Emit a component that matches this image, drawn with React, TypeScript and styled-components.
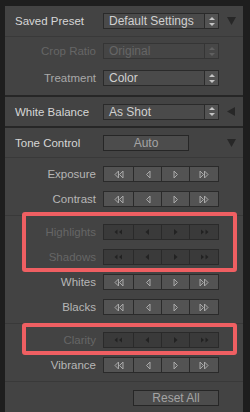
import React from 'react';
import styled, { createGlobalStyle } from 'styled-components';

const GlobalStyle = createGlobalStyle`
  html, body {
    margin: 0;
    padding: 0;
    background: #1e1e1e;
  }
  body {
    font-family: "Liberation Sans", Arial, sans-serif;
  }
`;

const Frame = styled.div`
  width: 250px;
  height: 412px;
  overflow: hidden;
  box-sizing: border-box;
  padding: 6px 7px 0 5px;
  background: #1e1e1e;
`;

const Panel = styled.div`
  height: 100%;
  background: #434343;
  display: flex;
  flex-direction: column;
`;

const Block = styled.div<{ $first?: boolean }>`
  border-top: ${({ $first }) => ($first ? 'none' : '2px solid #262626')};
`;

const HeaderRow = styled.div<{ $height: number; $line?: boolean }>`
  display: grid;
  grid-template-columns: 98px 116px 1fr;
  align-items: center;
  height: ${({ $height }) => $height}px;
  border-bottom: ${({ $line }) => ($line ? '1px solid #393939' : 'none')};
`;

const Group = styled.div<{ $pad?: string; $gap?: number; $line?: boolean }>`
  position: relative;
  display: flex;
  flex-direction: column;
  gap: ${({ $gap }) => $gap ?? 9}px;
  padding: ${({ $pad }) => $pad ?? '8px 0 8px'};
  border-top: ${({ $line }) => ($line ? '1px solid #393939' : 'none')};
`;

const Row = styled.div`
  display: grid;
  grid-template-columns: 98px 116px;
  align-items: center;
  height: 16px;
`;

const Stack = styled.div`
  position: relative;
  display: flex;
  flex-direction: column;
  gap: 9px;
`;

const Marker = styled.div<{ $top: number; $bottom: number }>`
  position: absolute;
  left: 17px;
  right: 6px;
  top: ${({ $top }) => $top}px;
  bottom: ${({ $bottom }) => $bottom}px;
  border: 4px solid #ef5f62;
  border-radius: 3px;
  pointer-events: none;
`;

type Tone = 'header' | 'normal' | 'dim' | 'off';

const labelColors: Record<Tone, string> = {
  header: '#d6d6d6',
  normal: '#b6b6b6',
  dim: '#a8a8a8',
  off: '#666666',
};

const Label = styled.span<{ $tone: Tone; $left?: boolean }>`
  font-size: 11.5px;
  line-height: 16px;
  white-space: nowrap;
  color: ${({ $tone }) => labelColors[$tone]};
  text-align: ${({ $left }) => ($left ? 'left' : 'right')};
  padding: ${({ $left }) => ($left ? '0 0 0 10px' : '0 7px 0 0')};
`;

const Select = styled.div<{ $off?: boolean }>`
  display: flex;
  height: 16px;
  box-sizing: border-box;
  border: 1px solid ${({ $off }) => ($off ? '#353535' : '#2a2a2a')};
  background: ${({ $off }) => ($off ? '#454545' : '#4a4a4a')};
`;

const SelectText = styled.span<{ $off?: boolean }>`
  flex: 1;
  padding-left: 5px;
  font-size: 12px;
  line-height: 14px;
  color: ${({ $off }) => ($off ? '#666666' : '#d0d0d0')};
`;

const Stepper = styled.span<{ $off?: boolean }>`
  width: 13px;
  display: flex;
  align-items: center;
  justify-content: center;
  border-left: 1px solid ${({ $off }) => ($off ? '#353535' : '#2a2a2a')};
  background: ${({ $off }) => ($off ? '#474747' : '#535353')};
`;

const PushButton = styled.div<{ $width: number }>`
  width: ${({ $width }) => $width}px;
  height: 16px;
  box-sizing: border-box;
  border: 1px solid #262626;
  background: #4c4c4c;
  color: #a4a4a4;
  font-size: 12px;
  line-height: 14px;
  text-align: center;
`;

const Segments = styled.div`
  display: grid;
  grid-template-columns: 29px 27px 27px 28px;
  gap: 1px;
  height: 16px;
  box-sizing: border-box;
  border: 1px solid #2a2a2a;
  background: #2a2a2a;
`;

const Segment = styled.div<{ $off?: boolean }>`
  display: flex;
  align-items: center;
  justify-content: center;
  background: ${({ $off }) => ($off ? '#3a3a3a' : '#535353')};
`;

const Twisty = styled.div`
  display: flex;
  justify-content: center;
  align-items: center;
`;

const ResetWrap = styled.div`
  display: grid;
  grid-template-columns: 128px 86px;
  padding: 8px 0;
  border-top: 1px solid #393939;
`;

const StepIcon = ({ off }: { off?: boolean }) => {
  const c = off ? '#606060' : '#c4c4c4';
  return (
    <svg width="6" height="9" viewBox="0 0 6 9">
      <polygon points="3,0 6,3 0,3" fill={c} />
      <polygon points="0,6 6,6 3,9" fill={c} />
    </svg>
  );
};

const Arrow = ({ kind, off }: { kind: 'll' | 'l' | 'r' | 'rr'; off?: boolean }) => {
  if (off) {
    const f = '#222222';
    if (kind === 'll')
      return (
        <svg width="9" height="8" viewBox="0 0 9 8">
          <polygon points="3.5,1.5 3.5,6.5 0.5,4" fill={f} />
          <polygon points="8,1.5 8,6.5 5,4" fill={f} />
        </svg>
      );
    if (kind === 'rr')
      return (
        <svg width="9" height="8" viewBox="0 0 9 8">
          <polygon points="1,1.5 1,6.5 4,4" fill={f} />
          <polygon points="5.5,1.5 5.5,6.5 8.5,4" fill={f} />
        </svg>
      );
    if (kind === 'l')
      return (
        <svg width="5" height="8" viewBox="0 0 5 8">
          <polygon points="4,1 4,7 0.5,4" fill={f} />
        </svg>
      );
    return (
      <svg width="5" height="8" viewBox="0 0 5 8">
        <polygon points="1,1 1,7 4.5,4" fill={f} />
      </svg>
    );
  }
  const props = {
    fill: '#595959',
    stroke: '#a9a9a9',
    strokeWidth: 1,
    strokeLinejoin: 'round' as const,
  };
  if (kind === 'll')
    return (
      <svg width="10" height="9" viewBox="0 0 10 9">
        <polygon points="4.5,1 4.5,8 1,4.5" {...props} />
        <polygon points="9,1 9,8 5.5,4.5" {...props} />
      </svg>
    );
  if (kind === 'rr')
    return (
      <svg width="10" height="9" viewBox="0 0 10 9">
        <polygon points="1,1 1,8 4.5,4.5" {...props} />
        <polygon points="5.5,1 5.5,8 9,4.5" {...props} />
      </svg>
    );
  if (kind === 'l')
    return (
      <svg width="6" height="9" viewBox="0 0 6 9">
        <polygon points="5,1 5,8 1.5,4.5" {...props} />
      </svg>
    );
  return (
    <svg width="6" height="9" viewBox="0 0 6 9">
      <polygon points="1,1 1,8 4.5,4.5" {...props} />
    </svg>
  );
};

const Down = () => (
  <svg width="9" height="8" viewBox="0 0 9 8">
    <polygon points="0,0 9,0 4.5,8" fill="#272727" />
  </svg>
);

const Left = () => (
  <svg width="8" height="9" viewBox="0 0 8 9">
    <polygon points="8,0 8,9 0,4.5" fill="#272727" />
  </svg>
);

const Dropdown = ({ value, off }: { value: string; off?: boolean }) => (
  <Select $off={off}>
    <SelectText $off={off}>{value}</SelectText>
    <Stepper $off={off}>
      <StepIcon off={off} />
    </Stepper>
  </Select>
);

const Adjust = ({ label, off }: { label: string; off?: boolean }) => (
  <Row>
    <Label $tone={off ? 'off' : 'normal'}>{label}</Label>
    <Segments>
      {(['ll', 'l', 'r', 'rr'] as const).map((k) => (
        <Segment key={k} $off={off}>
          <Arrow kind={k} off={off} />
        </Segment>
      ))}
    </Segments>
  </Row>
);

const App: React.FC = () => {
  return (
    <>
      <GlobalStyle />
      <Frame>
        <Panel>
          <Block $first>
            <HeaderRow $height={30} $line>
              <Label $tone="header" $left>Saved Preset</Label>
              <Dropdown value="Default Settings" />
              <Twisty>
                <Down />
              </Twisty>
            </HeaderRow>
            <Group $pad="6px 0 9px" $gap={11}>
              <Row>
                <Label $tone="off">Crop Ratio</Label>
                <Dropdown value="Original" off />
              </Row>
              <Row>
                <Label $tone="dim">Treatment</Label>
                <Dropdown value="Color" />
              </Row>
            </Group>
          </Block>

          <Block>
            <HeaderRow $height={29}>
              <Label $tone="header" $left>White Balance</Label>
              <Dropdown value="As Shot" />
              <Twisty>
                <Left />
              </Twisty>
            </HeaderRow>
          </Block>

          <Block>
            <HeaderRow $height={29} $line>
              <Label $tone="header" $left>Tone Control</Label>
              <PushButton $width={86}>Auto</PushButton>
              <Twisty>
                <Down />
              </Twisty>
            </HeaderRow>
            <Group>
              <Adjust label="Exposure" />
              <Adjust label="Contrast" />
            </Group>
            <Group $line>
              <Stack>
                <Adjust label="Highlights" off />
                <Adjust label="Shadows" off />
                <Marker $top={-12} $bottom={-7} />
              </Stack>
              <Adjust label="Whites" />
              <Adjust label="Blacks" />
            </Group>
            <Group $line>
              <Stack>
                <Adjust label="Clarity" off />
                <Marker $top={-9} $bottom={-7} />
              </Stack>
              <Adjust label="Vibrance" />
            </Group>
            <ResetWrap>
              <span />
              <PushButton $width={86}>Reset All</PushButton>
            </ResetWrap>
          </Block>
        </Panel>
      </Frame>
    </>
  );
};

export default App;
